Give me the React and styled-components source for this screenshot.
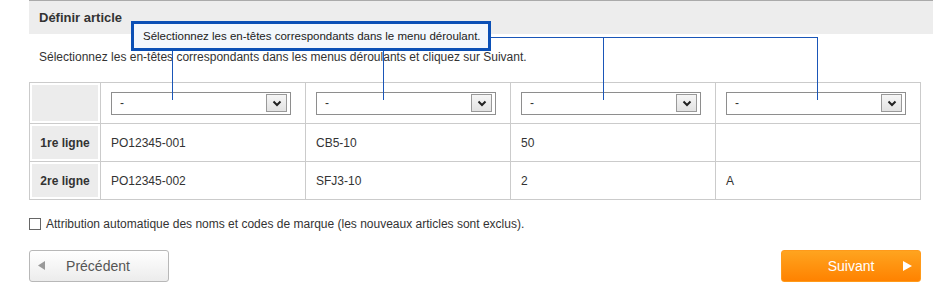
import React from 'react';
import styled, { createGlobalStyle } from 'styled-components';

const GlobalStyle = createGlobalStyle`
  body {
    margin: 0;
    background: #fff;
    font-family: "Liberation Sans", Arial, sans-serif;
    color: #333;
  }
`;

const Page = styled.div`
  position: relative;
  margin-left: 29px;
  width: 904px;
`;

const Header = styled.div`
  height: 33px;
  border-top: 1px solid #aaa;
  background: #ededed;
  padding-left: 10px;
  display: flex;
  align-items: center;
  font-size: 13px;
  font-weight: bold;
  color: #333;
`;

const Content = styled.div`
  width: 892px;
`;

const Intro = styled.p`
  margin: 15px 0 17px 10px;
  font-size: 12px;
  line-height: 16px;
`;

const Grid = styled.table`
  width: 892px;
  border-collapse: collapse;
  table-layout: fixed;
  font-size: 12px;
`;

const Cell = styled.td`
  border: 1px solid #cbcbcb;
  padding: 0 10px;
  height: ${({ head }) => (head ? '40px' : '37px')};
  color: #333;
  vertical-align: middle;
`;

const LabelCell = styled.th`
  width: 70px;
  border: 1px solid #cbcbcb;
  height: ${({ head }) => (head ? '40px' : '37px')};
  padding: 0;
  background: #ececec;
  box-shadow: inset 0 0 0 2px #fff;
  font-size: 12px;
  font-weight: bold;
  color: #333;
  text-align: center;
`;

const Select = styled.div`
  width: 180px;
  height: 23px;
  box-sizing: border-box;
  border: 1px solid #8e8e8e;
  background: #fff;
  display: flex;
  align-items: center;
  justify-content: space-between;
  padding: 0 3px 0 8px;
  font-size: 12px;
`;

const SelectButton = styled.span`
  width: 21px;
  height: 18px;
  box-sizing: border-box;
  border: 1px solid #999;
  background: linear-gradient(#f6f6f6, #e2e2e2);
  display: flex;
  align-items: center;
  justify-content: center;
`;

const CheckRow = styled.label`
  display: flex;
  align-items: center;
  gap: 5px;
  margin-top: 17px;
  font-size: 12px;
  color: #333;
`;

const Box = styled.span`
  width: 10px;
  height: 10px;
  border: 1px solid #666;
  background: #fff;
`;

const Actions = styled.div`
  display: flex;
  justify-content: space-between;
  margin-top: 19px;
`;

const NavButton = styled.button`
  width: 140px;
  height: 32px;
  box-sizing: border-box;
  border-radius: 3px;
  display: flex;
  align-items: center;
  padding: 0 8px;
  font-family: "Liberation Sans", Arial, sans-serif;
  font-size: 14px;
  border: 1px solid ${({ primary }) => (primary ? '#ff9a1a' : '#b8b8b8')};
  background: ${({ primary }) =>
    primary ? 'linear-gradient(#ffa41f, #ff8200)' : 'linear-gradient(#ffffff, #ececec)'};
  color: ${({ primary }) => (primary ? '#fff' : '#555')};
  flex-direction: ${({ primary }) => (primary ? 'row-reverse' : 'row')};
`;

const NavLabel = styled.span`
  flex: 1;
  text-align: center;
  padding-right: ${({ primary }) => (primary ? '0' : '12px')};
  padding-left: ${({ primary }) => (primary ? '10px' : '0')};
`;

const Tooltip = styled.div`
  position: absolute;
  left: 102px;
  top: 21px;
  width: 360px;
  height: 30px;
  box-sizing: border-box;
  border: 3px solid #0b50b6;
  background: #f3f7fc;
  padding-left: 9px;
  display: flex;
  align-items: center;
  white-space: nowrap;
  font-size: 11.5px;
  color: #222;
  z-index: 3;
`;

const Wire = styled.div`
  position: absolute;
  background: #1a56b8;
  z-index: 2;
`;

const columns = ['PO12345-001', 'CB5-10', '50', ''];
const rows = [
  { label: '1re ligne', cells: ['PO12345-001', 'CB5-10', '50', ''] },
  { label: '2re ligne', cells: ['PO12345-002', 'SFJ3-10', '2', 'A'] },
];

const Chevron = () => (
  <svg width="10" height="7" viewBox="0 0 10 7">
    <polyline points="1.5,1.5 5,5 8.5,1.5" fill="none" stroke="#222" strokeWidth="2" />
  </svg>
);

const Arrow = ({ right, color }) => (
  <svg width="10" height="12" viewBox="0 0 10 12">
    {right ? (
      <polygon points="1,1 10,6 1,11" fill={color} />
    ) : (
      <polygon points="7,1 7,10 0,5.5" fill={color} />
    )}
  </svg>
);

const App = () => {
  return (
    <Page>
      <GlobalStyle />
      <Header>Définir article</Header>

      <Tooltip>Sélectionnez les en-têtes correspondants dans le menu déroulant.</Tooltip>
      <Wire style={{ left: 143, top: 51, width: 1, height: 49 }} />
      <Wire style={{ left: 354, top: 51, width: 1, height: 49 }} />
      <Wire style={{ left: 462, top: 37, width: 327, height: 1 }} />
      <Wire style={{ left: 574, top: 37, width: 1, height: 63 }} />
      <Wire style={{ left: 788, top: 37, width: 1, height: 63 }} />

      <Content>
        <Intro>
          Sélectionnez les en-têtes correspondants dans les menus déroulants et cliquez sur Suivant.
        </Intro>

        <Grid>
          <tbody>
            <tr>
              <LabelCell head />
              {columns.map((c, i) => (
                <Cell head key={i}>
                  <Select>
                    -
                    <SelectButton>
                      <Chevron />
                    </SelectButton>
                  </Select>
                </Cell>
              ))}
            </tr>
            {rows.map((r) => (
              <tr key={r.label}>
                <LabelCell>{r.label}</LabelCell>
                {r.cells.map((c, i) => (
                  <Cell key={i}>{c}</Cell>
                ))}
              </tr>
            ))}
          </tbody>
        </Grid>

        <CheckRow>
          <Box />
          Attribution automatique des noms et codes de marque (les nouveaux articles sont exclus).
        </CheckRow>

        <Actions>
          <NavButton>
            <Arrow color="#999" />
            <NavLabel>Précédent</NavLabel>
          </NavButton>
          <NavButton primary>
            <Arrow right color="#fff" />
            <NavLabel primary>Suivant</NavLabel>
          </NavButton>
        </Actions>
      </Content>
    </Page>
  );
};

export default App;
